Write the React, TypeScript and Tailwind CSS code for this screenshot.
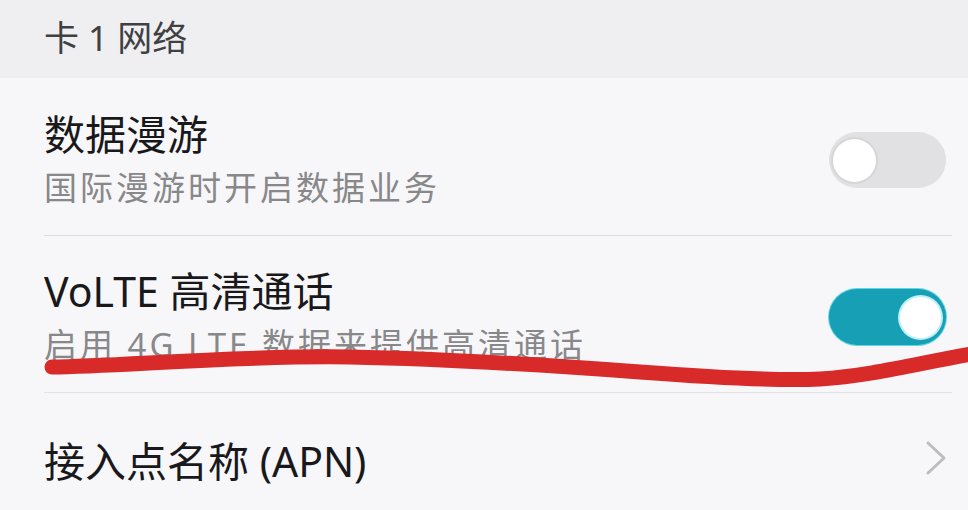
import React from "react";

const font = { fontFamily: '"Noto Sans", "Noto Sans CJK SC", sans-serif' };

function Toggle({ on }: { on: boolean }) {
  return on ? (
    <div className="flex h-[56px] w-[117px] shrink-0 items-center justify-end rounded-full bg-[#17a0b5] pr-[5px] ring-1 ring-[#5fd6e3]">
      <div className="h-[41px] w-[41px] rounded-full bg-white ring-2 ring-[#bff0f5]" />
    </div>
  ) : (
    <div className="flex h-[56px] w-[117px] shrink-0 items-center rounded-full bg-[#e1e1e4] pl-[4px]">
      <div className="h-[43px] w-[43px] rounded-full bg-white ring-2 ring-[#d6d6d9]" />
    </div>
  );
}

function Row({
  title,
  sub,
  on,
  pt,
}: {
  title: string;
  sub: string;
  on: boolean;
  pt: string;
}) {
  return (
    <div className={`flex items-center pl-[44px] pr-[22px] pb-[25px] ${pt}`}>
      <div className="flex-1">
        <div className="text-[41px] leading-[48px] text-[#19191b]">{title}</div>
        <div className="mt-[8px] text-[33px] leading-[44px] tracking-[3px] text-[#88888a]">{sub}</div>
      </div>
      <Toggle on={on} />
    </div>
  );
}

export default function App() {
  return (
    <div className="relative h-[510px] w-[968px] overflow-hidden bg-[#f7f7f9]" style={font}>
      <div className="flex h-[78px] items-center bg-[#efeff1] pl-[44px] pb-[2px] text-[35px] text-[#404042]">
        卡 1 网络
      </div>

      <Row title="数据漫游" sub="国际漫游时开启数据业务" on={false} pt="pt-[32px]" />
      <div className="ml-[44px] mr-[16px] h-px bg-[#dcdcde]" />

      <Row title="VoLTE 高清通话" sub="启用 4G LTE 数据来提供高清通话" on={true} pt="pt-[31px]" />
      <div className="ml-[44px] mr-[16px] h-px bg-[#e3e3e5]" />

      <div className="flex items-center pl-[44px] pr-[22px] pt-[44px]">
        <div className="flex-1 text-[41px] leading-[48px] text-[#19191b]">接入点名称 (APN)</div>
        <svg width="24" height="36" viewBox="0 0 24 36" className="mr-[-2px] mt-[-6px]">
          <path d="M4 3 L20 18 L4 33" fill="none" stroke="#bdbdc0" strokeWidth="3" strokeLinecap="round" strokeLinejoin="round" />
        </svg>
      </div>

      <svg
        className="pointer-events-none absolute inset-0"
        width="968"
        height="510"
        viewBox="0 0 968 510"
      >
        <path
          d="M52 367 C 120 366, 250 355, 350 357 C 450 359, 560 366, 640 372 C 720 378, 780 381, 820 379 C 870 376, 920 363, 972 354"
          fill="none"
          stroke="#d92a2a"
          strokeWidth="15"
          strokeLinecap="round"
        />
      </svg>
    </div>
  );
}
